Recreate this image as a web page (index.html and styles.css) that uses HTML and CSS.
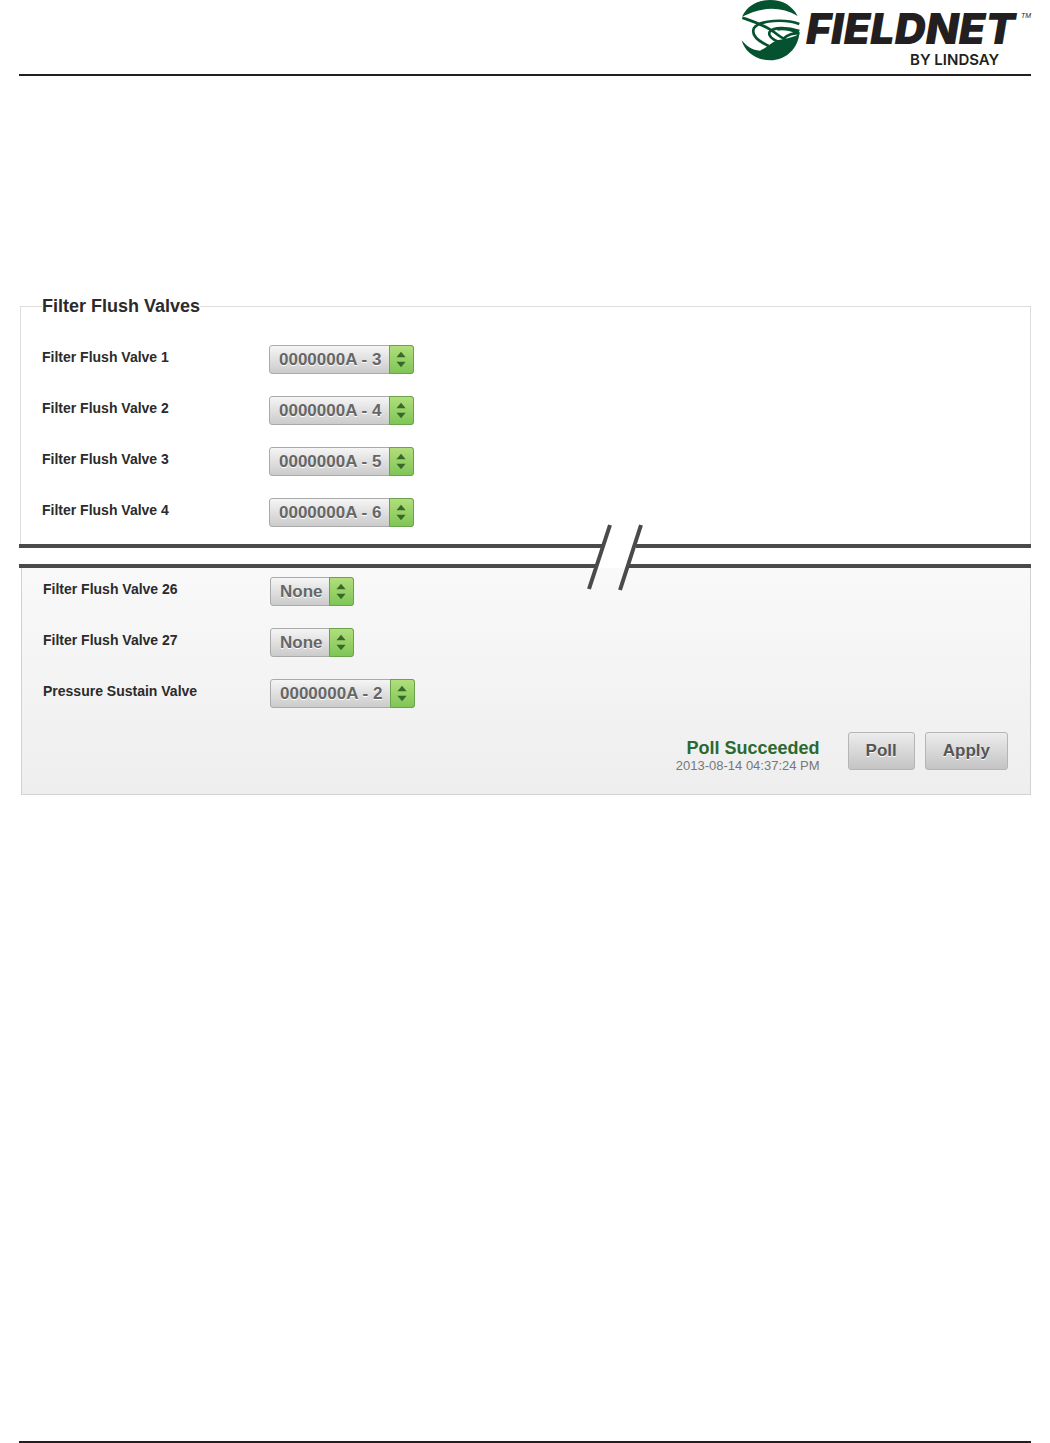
FILE: index.html
```
<!DOCTYPE html>
<html lang="en">
<head>
    <meta charset="UTF-8">
    <meta name="viewport" content="width=device-width, initial-scale=1.0">
    <title>FieldNET - Filter Flush Valves</title>
    <link rel="stylesheet" href="styles.css">
</head>
<body>
    <header class="page-header">
        <svg class="logo" width="290" height="68" viewBox="0 0 290 68" role="img" aria-label="FieldNET by Lindsay">
            <g transform="translate(-3 0) scale(.3333)">
                <path class="globe" d="M12 50 C30 14 60 0 97 0 C134 0 163 17 179 48 C130 20 75 18 12 50Z"/>
                <path class="globe" d="M11 121 C25 138 43 152 66 152 C86 144 100 126 122 120 C145 116 165 112 184 103 C177 152 139 181 98 181 C56 181 21 158 11 121Z"/>
                <path class="globe-line" d="M13 53 C50 66 82 76 108 96 C118 104 128 112 142 118"/>
                <path class="globe-line" d="M184 72 C140 56 66 60 48 84 C38 106 62 124 92 138"/>
                <path class="globe-line" d="M184 93 C150 82 104 80 94 97 C90 110 108 120 124 127"/>
                <path class="globe-line" d="M118 88 C146 84 166 92 184 101 C168 98 148 104 136 116"/>
            </g>
            <text class="logo-name" x="65" y="44">FIELDNET</text>
            <text class="logo-tm" x="280" y="18">TM</text>
            <text class="logo-by" x="169" y="65">BY LINDSAY</text>
        </svg>
    </header>

    <main>
        <fieldset class="valves">
            <legend>Filter Flush Valves</legend>
            <div class="row">
                <label for="valve1">Filter Flush Valve 1</label>
                <span class="select">
                    <select id="valve1"><option>0000000A - 3</option></select>
                    <svg class="arrows" viewBox="0 0 25 29"><path d="M7 12l5-6 5 6zM7 17l5 6 5-6z"/></svg>
                </span>
            </div>
            <div class="row">
                <label for="valve2">Filter Flush Valve 2</label>
                <span class="select">
                    <select id="valve2"><option>0000000A - 4</option></select>
                    <svg class="arrows" viewBox="0 0 25 29"><path d="M7 12l5-6 5 6zM7 17l5 6 5-6z"/></svg>
                </span>
            </div>
            <div class="row">
                <label for="valve3">Filter Flush Valve 3</label>
                <span class="select">
                    <select id="valve3"><option>0000000A - 5</option></select>
                    <svg class="arrows" viewBox="0 0 25 29"><path d="M7 12l5-6 5 6zM7 17l5 6 5-6z"/></svg>
                </span>
            </div>
            <div class="row">
                <label for="valve4">Filter Flush Valve 4</label>
                <span class="select">
                    <select id="valve4"><option>0000000A - 6</option></select>
                    <svg class="arrows" viewBox="0 0 25 29"><path d="M7 12l5-6 5 6zM7 17l5 6 5-6z"/></svg>
                </span>
            </div>
        </fieldset>

        <!-- valves 5 to 25 are left out -->
        <div class="break">
            <div class="break-left"></div>
            <svg class="break-mark" width="58" height="67" viewBox="0 0 58 67">
                <path d="M0 22H17M50 22H58M0 42H11M43 42H58M24 1L3 65M55 1L34 66"/>
            </svg>
            <div class="break-right"></div>
        </div>

        <section class="panel">
            <div class="row">
                <label for="valve26">Filter Flush Valve 26</label>
                <span class="select">
                    <select id="valve26"><option>None</option></select>
                    <svg class="arrows" viewBox="0 0 25 29"><path d="M7 12l5-6 5 6zM7 17l5 6 5-6z"/></svg>
                </span>
            </div>
            <div class="row">
                <label for="valve27">Filter Flush Valve 27</label>
                <span class="select">
                    <select id="valve27"><option>None</option></select>
                    <svg class="arrows" viewBox="0 0 25 29"><path d="M7 12l5-6 5 6zM7 17l5 6 5-6z"/></svg>
                </span>
            </div>
            <div class="row">
                <label for="sustain">Pressure Sustain Valve</label>
                <span class="select">
                    <select id="sustain"><option>0000000A - 2</option></select>
                    <svg class="arrows" viewBox="0 0 25 29"><path d="M7 12l5-6 5 6zM7 17l5 6 5-6z"/></svg>
                </span>
            </div>
            <div class="actions">
                <div class="status">
                    <div class="status-text">Poll Succeeded</div>
                    <div class="status-time">2013-08-14 04:37:24 PM</div>
                </div>
                <button type="button">Poll</button>
                <button type="button">Apply</button>
            </div>
        </section>
    </main>

    <footer class="page-footer"></footer>
</body>
</html>
```
FILE: styles.css
```
* {
    box-sizing: border-box;
}
body {
    margin: 0;
    padding: 0 19px;
    min-height: 100vh;
    display: flex;
    flex-direction: column;
    background: white;
    color: #2b2b2b;
    font-family: "Liberation Sans", Arial, sans-serif;
    font-size: 14px;
}

/* header and footer */
.page-header {
    display: flex;
    justify-content: flex-end;
    height: 76px;
    border-bottom: 2px solid #231f20;
}
.logo {
    overflow: visible;
}
.globe {
    fill: #04522f;
}
.globe-line {
    fill: none;
    stroke: #04522f;
    stroke-width: 8;
}
.logo-name,
.logo-tm,
.logo-by {
    fill: #231f20;
}
.logo-name {
    font: italic 900 43px Inter, sans-serif;
}
.logo-tm {
    font: italic 7px "Liberation Sans", sans-serif;
}
.logo-by {
    font: 600 15px Inter, sans-serif;
}
.page-footer {
    margin-top: auto;
    border-top: 2px solid #231f20;
}

/* valve settings */
main {
    padding-top: 220px;
}
.valves {
    margin: 0 0 0 1px;
    padding: 29px 21px 17px;
    border: 1px solid #ddd;
    border-bottom: none;
}
legend {
    padding: 0;
    font-size: 18px;
    font-weight: bold;
    line-height: 20px;
}
.row {
    display: grid;
    grid-template-columns: 227px 1fr;
    align-items: start;
}
.row + .row {
    margin-top: 22px;
}
.row label {
    font-weight: bold;
    line-height: 24px;
}
.select {
    position: relative;
    justify-self: start;
    display: flex;
}
.select select {
    appearance: none;
    height: 29px;
    margin: 0;
    padding: 0 30px 0 9px;
    border: 1px solid #aaa;
    border-radius: 3px;
    background: linear-gradient(#f5f5f5, #cbcbcb);
    color: #666;
    font: bold 17px "Liberation Sans", Arial, sans-serif;
    text-shadow: 0 1px 0 white;
}
.arrows {
    position: absolute;
    top: 0;
    right: 0;
    width: 25px;
    height: 29px;
    border: 1px solid #69a34b;
    border-radius: 0 3px 3px 0;
    background: linear-gradient(#b1de7b, #7fc556);
    fill: #38692a;
    pointer-events: none;
}

/* cut between the two parts of the list */
.break {
    display: flex;
    height: 24px;
}
.break-left,
.break-right {
    border: solid #4b494a;
    border-width: 4px 0;
}
.break-left {
    width: 56%;
}
.break-right {
    flex: 1;
}
.break-mark {
    position: relative;
    flex: none;
    margin-top: -20px;
    fill: none;
    stroke: #4b494a;
    stroke-width: 4;
}

.panel {
    margin-left: 2px;
    padding: 9px 22px 24px 21px;
    border: 1px solid #d2d2d2;
    border-top: none;
    background: linear-gradient(#f9f9f9, #eee);
}
.actions {
    display: flex;
    align-items: flex-start;
    justify-content: flex-end;
    gap: 10px;
    height: 38px;
    margin-top: 24px;
}
.status {
    margin: 6px 18px 0 0;
    text-align: right;
}
.status-text {
    color: #2a6a30;
    font-size: 18px;
    font-weight: bold;
    line-height: 20px;
}
.status-time {
    color: #777;
    font-size: 13px;
    line-height: 15px;
}
button {
    height: 38px;
    padding: 0 17px;
    border: 1px solid #b5b5b5;
    border-radius: 3px;
    background: linear-gradient(#ececec, #c4c4c4);
    color: #555;
    font: bold 17px "Liberation Sans", Arial, sans-serif;
    text-shadow: 0 1px 0 white;
    cursor: pointer;
}
```
